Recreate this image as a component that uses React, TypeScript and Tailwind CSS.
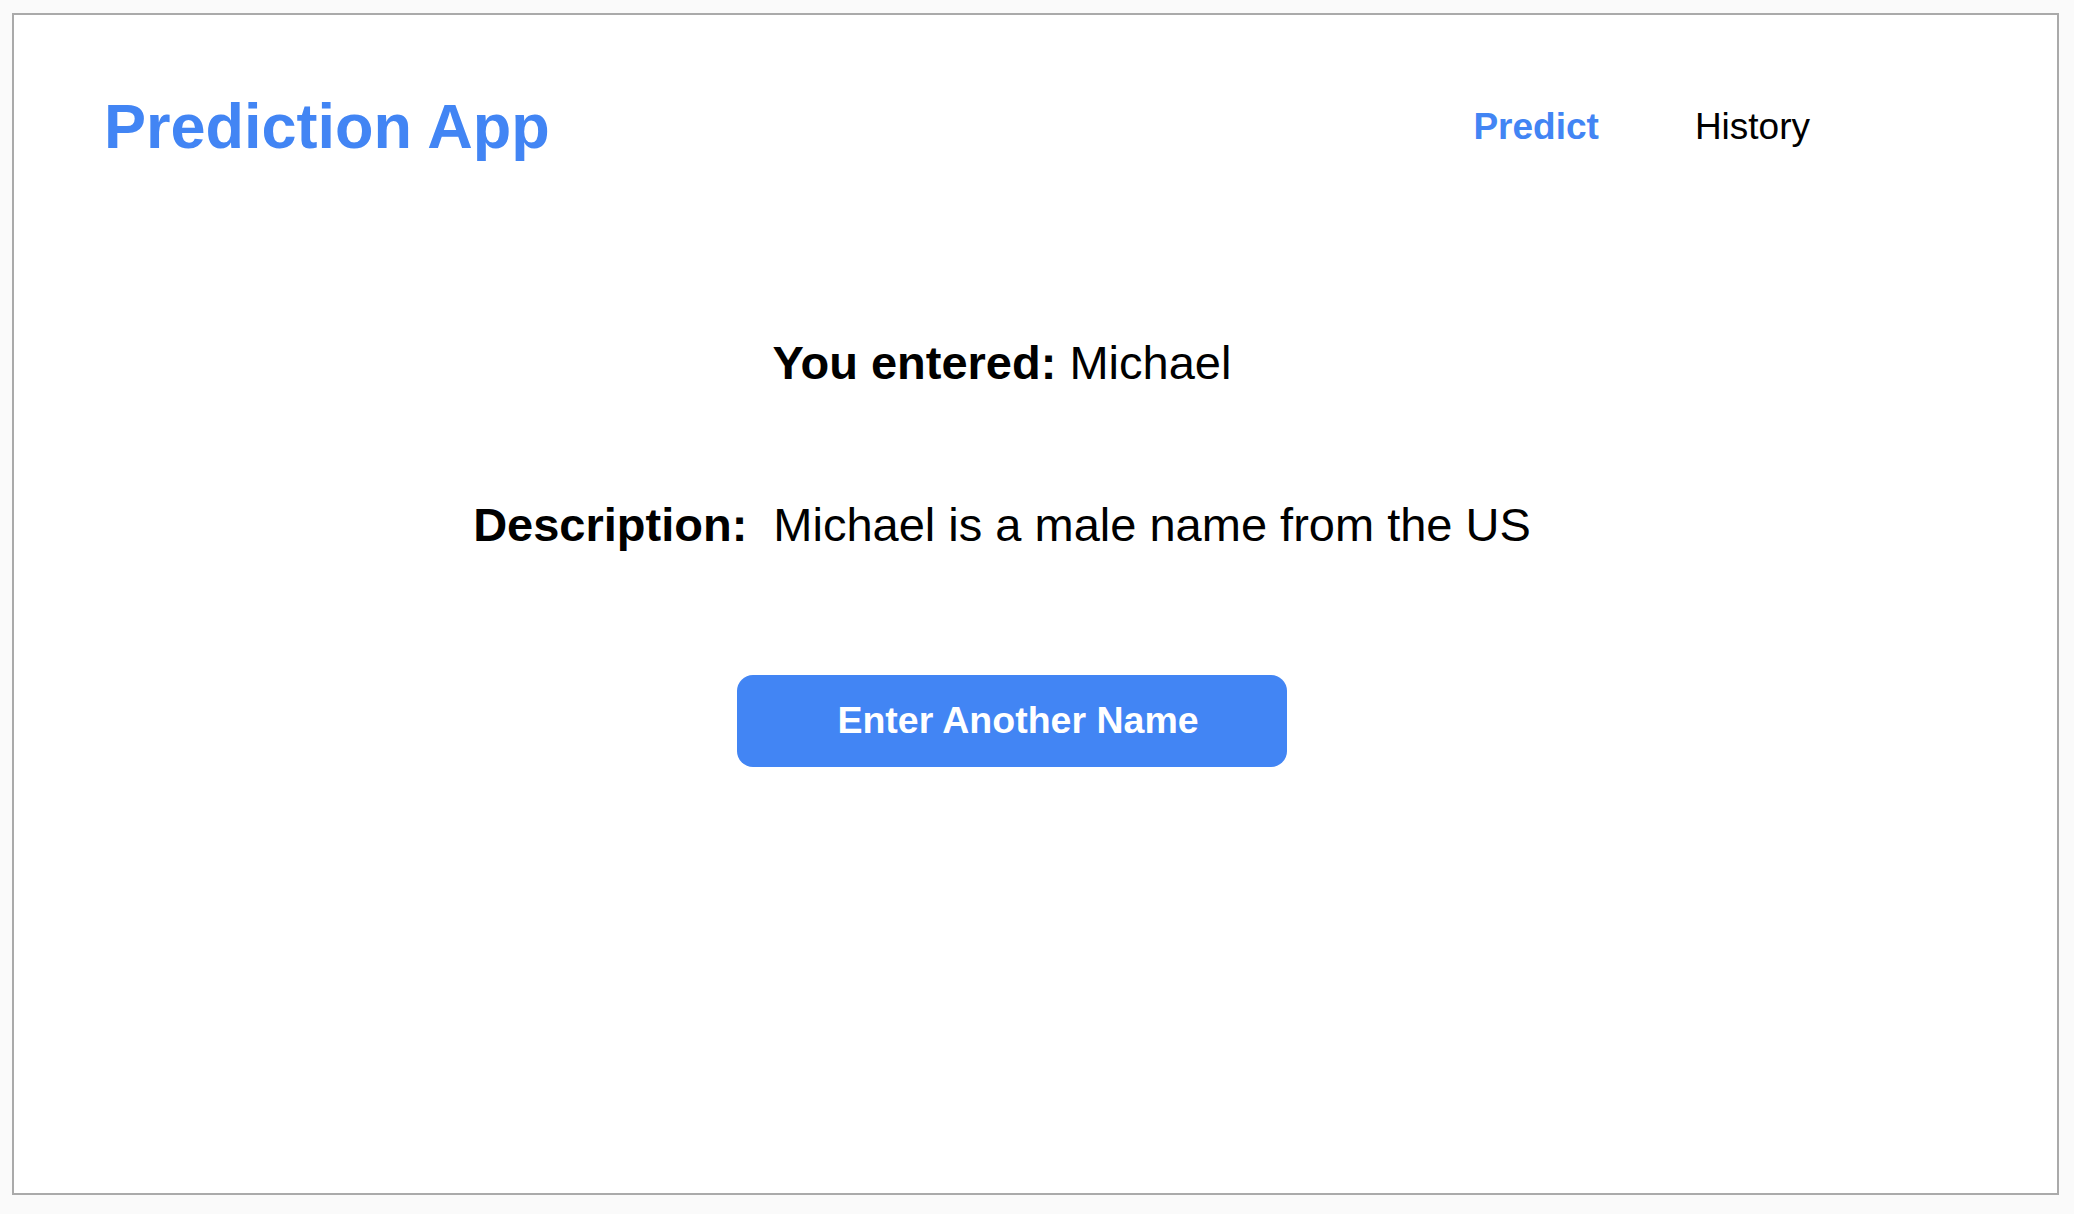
const font = { fontFamily: '"Liberation Sans", Arial, sans-serif' }

export default function App() {
  return (
    <div className="min-h-screen bg-[#fafafa] pl-[12px] pt-[13px]" style={font}>
      <div className="flex h-[1182px] w-[2047px] flex-col border-2 border-[#aaaaaa] bg-white">
        <header className="flex h-[222px] items-center pl-[90px] pr-[247px]">
          <h1 className="text-[63px] font-bold leading-none text-[#4285f4]">Prediction App</h1>
          <nav className="ml-auto flex items-center gap-[96px] text-[37px] leading-none">
            <a className="font-bold text-[#4285f4]">Predict</a>
            <a className="text-black">History</a>
          </nav>
        </header>

        <main className="flex flex-col items-center pr-[67px] pt-[102px] text-black">
          <p className="text-[47px] leading-[47px]">
            <span className="font-bold">You entered:</span> Michael
          </p>
          <div className="mt-[115px] flex gap-[26px] text-[47px] leading-[47px]">
            <span className="font-bold">Description:</span>
            <span>Michael is a male name from the US</span>
          </div>
          <button className="ml-[20px] mt-[127px] flex h-[92px] w-[550px] items-center justify-center rounded-[16px] bg-[#4285f4] pl-[12px] text-[37.5px] font-bold leading-none text-white">
            Enter Another Name
          </button>
        </main>
      </div>
    </div>
  )
}
